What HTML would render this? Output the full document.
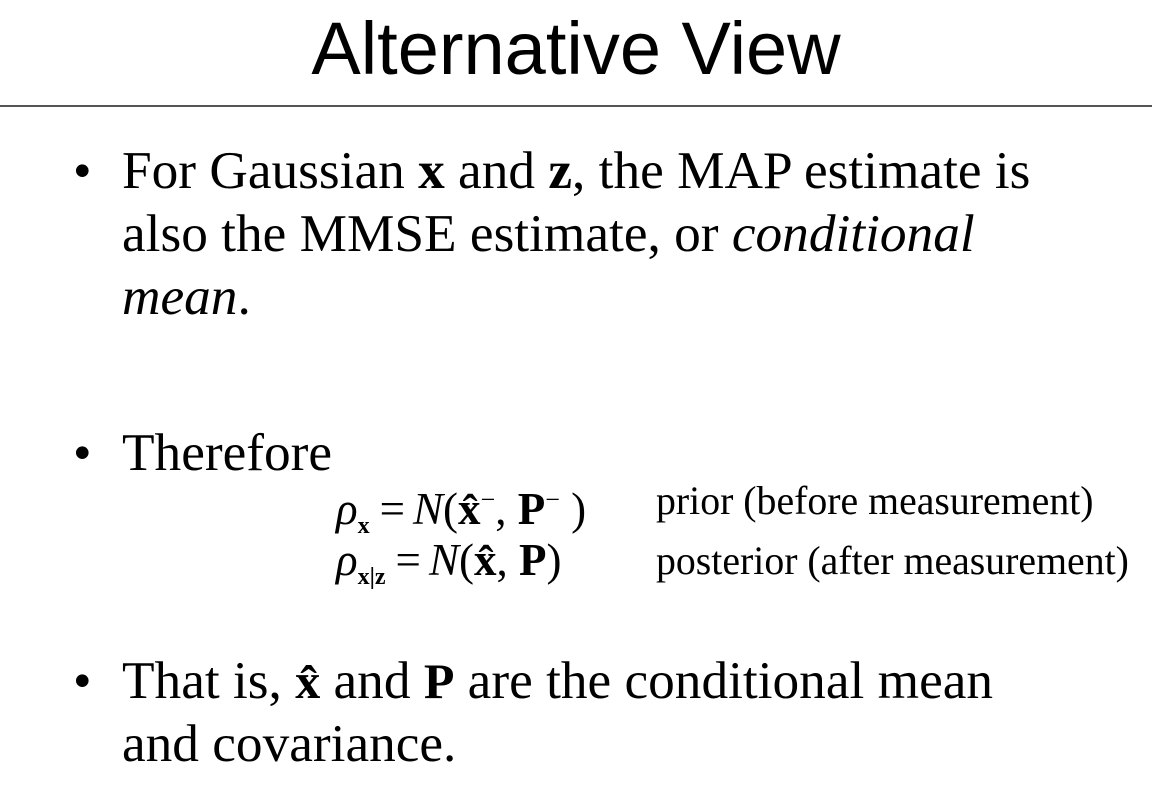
<!DOCTYPE html>
<html><head><meta charset="utf-8"><style>
body{margin:0;width:1152px;height:806px;background:#fff;position:relative;overflow:hidden;color:#000}
.t{position:absolute;left:0;width:1152px;text-align:center;top:12px;font:74px/74px "Liberation Sans",sans-serif}
.hr{position:absolute;left:0;top:105px;width:1152px;height:2px;background:#555}
.l{position:absolute;font-family:"Liberation Serif",serif;font-size:53.3px;line-height:52px;white-space:nowrap}
.b{position:absolute;left:73px;font-family:"Liberation Serif",serif;font-size:53px;line-height:52px}
.eq{position:absolute;font-family:"Liberation Serif",serif;font-size:45px;line-height:44px;white-space:nowrap}
.eq .s{display:inline-block;margin:0 8px 0 10px}
.c{position:absolute;left:656px;font-family:"Liberation Serif",serif;font-size:39.8px;line-height:40px;white-space:nowrap}
sub{font-size:24px;font-weight:bold;vertical-align:-9px}
sup{font-size:26px;vertical-align:16px}
</style></head><body>
<div class="t">Alternative View</div>
<div class="hr"></div>
<div class="b" style="top:145px">•</div>
<div class="l" style="left:122px;top:145px">For Gaussian <b>x</b> and <b>z</b>, the MAP estimate is</div>
<div class="l" style="left:122px;top:208px">also the MMSE estimate, or <i>conditional</i></div>
<div class="l" style="left:122px;top:271px"><i>mean</i>.</div>
<div class="b" style="top:427px">•</div>
<div class="l" style="left:122px;top:427px">Therefore</div>
<div class="eq" style="left:336px;top:478px"><i>ρ</i><sub>x</sub><span class="s">=</span><i>N</i>(<b>x̂</b><sup>−</sup>, <b>P</b><sup>−</sup>&nbsp;)</div>
<div class="eq" style="left:336px;top:538px"><i>ρ</i><sub>x|z</sub><span class="s">=</span><i>N</i>(<b>x̂</b>, <b>P</b>)</div>
<div class="c" style="top:481px">prior (before measurement)</div>
<div class="c" style="top:541px">posterior (after measurement)</div>
<div class="b" style="top:655px">•</div>
<div class="l" style="left:122px;top:655px">That is, <b style="font-size:50px">x̂</b> and <b style="font-size:50px">P</b> are the conditional mean</div>
<div class="l" style="left:122px;top:718px">and covariance.</div>
</body></html>
